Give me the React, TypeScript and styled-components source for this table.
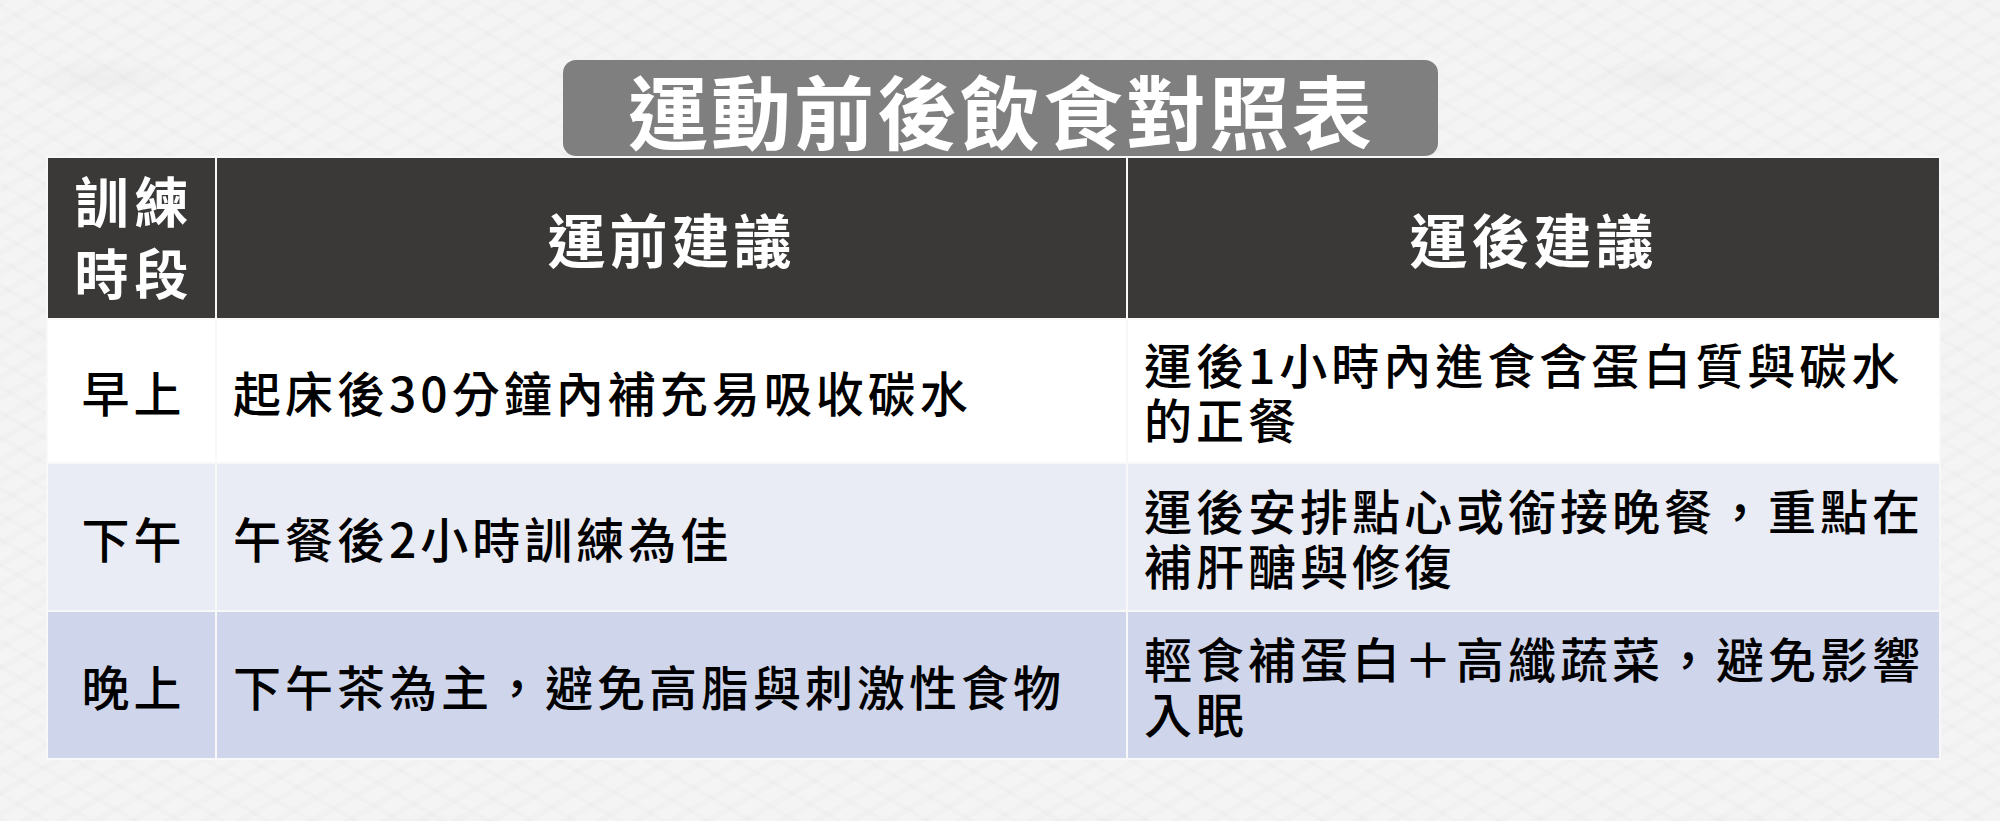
import * as React from 'react'
import styled, { createGlobalStyle } from 'styled-components'

const FONT = `"Noto Sans CJK TC", "Noto Sans CJK SC", "Noto Sans", sans-serif`

const GlobalStyle = createGlobalStyle`
  html, body {
    margin: 0;
    padding: 0;
  }
  body {
    font-family: ${FONT};
    background: #f3f3f3;
  }
`

type Tone = 'white' | 'light' | 'mid'

const TONES: Record<Tone, string> = {
  white: '#ffffff',
  light: '#e9ebf5',
  mid: '#cfd5ea',
}

interface Row {
  period: string
  before: string
  after: string[]
  tone: Tone
}

const ROWS: Row[] = [
  {
    period: '早上',
    before: '起床後30分鐘內補充易吸收碳水',
    after: ['運後1小時內進食含蛋白質與碳水', '的正餐'],
    tone: 'white',
  },
  {
    period: '下午',
    before: '午餐後2小時訓練為佳',
    after: ['運後安排點心或銜接晚餐，重點在', '補肝醣與修復'],
    tone: 'light',
  },
  {
    period: '晚上',
    before: '下午茶為主，避免高脂與刺激性食物',
    after: ['輕食補蛋白＋高纖蔬菜，避免影響', '入眠'],
    tone: 'mid',
  },
]

const Page = styled.div`
  width: 2000px;
  height: 821px;
  overflow: hidden;
  background-color: #f4f4f4;
  background-image: radial-gradient(
      ellipse 120px 30px at 20% 30%,
      rgba(0, 0, 0, 0.025),
      transparent 70%
    ),
    radial-gradient(
      ellipse 160px 40px at 70% 80%,
      rgba(0, 0, 0, 0.03),
      transparent 70%
    ),
    repeating-linear-gradient(
      150deg,
      rgba(0, 0, 0, 0.012) 0 6px,
      transparent 6px 18px
    ),
    repeating-linear-gradient(
      30deg,
      rgba(0, 0, 0, 0.01) 0 4px,
      transparent 4px 22px
    );
  background-size: 520px 260px, 640px 300px, auto, auto;
  display: flex;
  flex-direction: column;
  padding-top: 60px;
  box-sizing: border-box;
`

const TitleRow = styled.div`
  display: flex;
  justify-content: center;
`

const TitleBox = styled.div`
  width: 875px;
  height: 96px;
  background: #7f7f7f;
  border-radius: 13px;
  display: flex;
  align-items: center;
  justify-content: center;
`

const Title = styled.h1`
  margin: 0;
  color: #ffffff;
  font-family: ${FONT};
  font-weight: 700;
  font-size: 80px;
  line-height: 1;
  letter-spacing: 3px;
  padding-left: 3px;
`

const Table = styled.div`
  margin-left: 46px;
  width: 1895px;
  box-sizing: border-box;
  padding: 2px;
  background: #f8f8f8;
  display: grid;
  grid-template-columns: 167px 909px 811px;
  grid-template-rows: 160px 142px 146px 146px;
  gap: 2px;
`

const HeadCell = styled.div`
  background: #3a3938;
  color: #ffffff;
  font-weight: 700;
  font-size: 58px;
  letter-spacing: 4px;
  display: flex;
  align-items: center;
  justify-content: center;
`

const PeriodHead = styled(HeadCell)`
  flex-direction: column;
  font-size: 54px;
  line-height: 72px;
  letter-spacing: 6px;
  padding-left: 6px;
  padding-bottom: 4px;
`

const Cell = styled.div<{ $tone: Tone }>`
  background: ${p => TONES[p.$tone]};
  color: #000000;
  font-weight: 500;
  font-size: 48px;
  letter-spacing: 4px;
  line-height: 55px;
  display: flex;
  flex-direction: column;
  justify-content: center;
  padding: 0 0 0 16px;
  white-space: nowrap;
`

const PeriodCell = styled(Cell)`
  align-items: center;
  padding: 0 0 0 4px;
`

const Line = styled.span`
  display: block;
  height: 55px;
`

export default function App() {
  return (
    <>
      <GlobalStyle />
      <Page>
        <TitleRow>
          <TitleBox>
            <Title>運動前後飲食對照表</Title>
          </TitleBox>
        </TitleRow>
        <Table>
          <PeriodHead>
            <span>訓練</span>
            <span>時段</span>
          </PeriodHead>
          <HeadCell>運前建議</HeadCell>
          <HeadCell>運後建議</HeadCell>
          {ROWS.map(row => (
            <React.Fragment key={row.period}>
              <PeriodCell $tone={row.tone}>{row.period}</PeriodCell>
              <Cell $tone={row.tone}>{row.before}</Cell>
              <Cell $tone={row.tone}>
                {row.after.map(line => (
                  <Line key={line}>{line}</Line>
                ))}
              </Cell>
            </React.Fragment>
          ))}
        </Table>
      </Page>
    </>
  )
}
